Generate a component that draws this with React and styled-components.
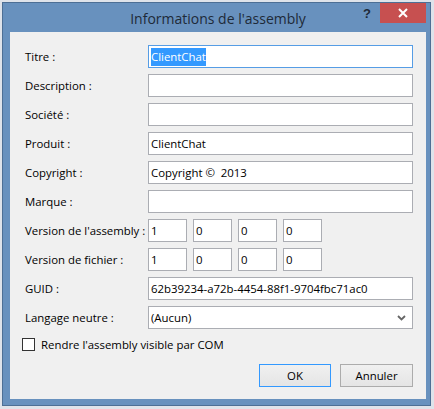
import React from "react";
import styled, { createGlobalStyle } from "styled-components";

const GlobalStyle = createGlobalStyle`
  html, body {
    margin: 0;
    padding: 0;
    background: #dfe3ea;
  }
  body {
    font-family: "Open Sans", "Noto Sans", "Liberation Sans", sans-serif;
    font-size: 11.4px;
  }
`;

const Window = styled.div`
  margin: 2px 0 0 2px;
  width: 429px;
  height: 404px;
  box-sizing: border-box;
  background: #6891be;
  border: 1px solid #4d6f95;
  display: flex;
  flex-direction: column;
  padding: 0 4px 6px 7px;
  position: relative;
`;

const TitleBar = styled.div`
  height: 29px;
  display: flex;
  align-items: center;
  justify-content: center;
  flex-shrink: 0;
`;

const Title = styled.div`
  font-family: "Open Sans", "Noto Sans", sans-serif;
  font-size: 14px;
  color: #1e2a38;
  margin-top: 1px;
`;

const Controls = styled.div`
  position: absolute;
  top: 0;
  right: 4px;
  display: flex;
  align-items: flex-start;
`;

const HelpBtn = styled.div`
  width: 20px;
  height: 20px;
  display: flex;
  align-items: center;
  justify-content: center;
  font-family: "Liberation Sans", sans-serif;
  font-weight: bold;
  font-size: 13px;
  color: #1e2a38;
  margin-right: 3px;
`;

const CloseBtn = styled.div`
  width: 46px;
  height: 20px;
  background: #c75050;
  display: flex;
  align-items: center;
  justify-content: center;
`;

const Client = styled.div`
  flex: 1;
  background: #f0f0f0;
  padding: 13px 13px 0 15px;
  display: flex;
  flex-direction: column;
`;

const Form = styled.div`
  display: grid;
  grid-template-columns: 123px 265px;
  grid-auto-rows: 23px;
  row-gap: 6px;
`;

const Label = styled.div`
  display: flex;
  align-items: center;
  color: #000;
  white-space: nowrap;
`;

const Field = styled.div`
  box-sizing: border-box;
  height: 23px;
  width: ${p => (p.$small ? "39px" : "100%")};
  background: #fff;
  border: 1px solid ${p => (p.$focus ? "#569de5" : "#abadb3")};
  display: flex;
  align-items: center;
  padding-left: 2px;
  color: #000;
  white-space: pre;
  position: relative;
`;

const Selected = styled.span`
  background: #3399ff;
  color: #fff;
  padding: 1px 0 2px;
`;

const VersionRow = styled.div`
  display: flex;
  gap: 6px;
`;

const Chevron = styled.div`
  position: absolute;
  right: 6px;
  top: 8px;
  display: flex;
`;

const CheckRow = styled.label`
  display: flex;
  align-items: center;
  gap: 6px;
  margin: 9px 0 0 -3px;
  height: 13px;
  color: #000;
`;

const CheckBox = styled.span`
  width: 13px;
  height: 13px;
  box-sizing: border-box;
  border: 1px solid #333;
  background: #fff;
`;

const Buttons = styled.div`
  display: flex;
  justify-content: flex-end;
  gap: 9px;
  margin-top: 13px;
`;

const Button = styled.div`
  box-sizing: border-box;
  width: ${p => (p.$w ? p.$w : 73)}px;
  height: 23px;
  border: 1px solid ${p => (p.$default ? "#3399ff" : "#acacac")};
  background: linear-gradient(#f0f0f0, #e5e5e5);
  display: flex;
  align-items: center;
  justify-content: center;
  color: #000;
`;

const rows = [
  { label: "Titre :", value: "ClientChat", focus: true },
  { label: "Description :", value: "" },
  { label: "Société :", value: "" },
  { label: "Produit :", value: "ClientChat" },
  { label: "Copyright :", value: "Copyright ©  2013" },
  { label: "Marque :", value: "" },
];

const Version = ({ values }) => (
  <VersionRow>
    {values.map((v, i) => (
      <Field key={i} $small>{v}</Field>
    ))}
  </VersionRow>
);

export default function App() {
  return (
    <>
      <GlobalStyle />
      <Window>
        <TitleBar>
          <Title>Informations de l'assembly</Title>
        </TitleBar>
        <Controls>
          <HelpBtn>?</HelpBtn>
          <CloseBtn>
            <svg width="10" height="10" viewBox="0 0 10 10">
              <path d="M1 1 L9 9 M9 1 L1 9" stroke="#fff" strokeWidth="2" />
            </svg>
          </CloseBtn>
        </Controls>
        <Client>
          <Form>
            {rows.map(r => (
              <React.Fragment key={r.label}>
                <Label>{r.label}</Label>
                <Field $focus={r.focus}>
                  {r.focus ? <Selected>{r.value}</Selected> : r.value}
                </Field>
              </React.Fragment>
            ))}
            <Label>Version de l'assembly :</Label>
            <Version values={["1", "0", "0", "0"]} />
            <Label>Version de fichier :</Label>
            <Version values={["1", "0", "0", "0"]} />
            <Label>GUID :</Label>
            <Field>62b39234-a72b-4454-88f1-9704fbc71ac0</Field>
            <Label>Langage neutre :</Label>
            <Field>
              (Aucun)
              <Chevron>
                <svg width="9" height="6" viewBox="0 0 9 6">
                  <path d="M1 1 L4.5 4.5 L8 1" stroke="#666" strokeWidth="1.8" fill="none" />
                </svg>
              </Chevron>
            </Field>
          </Form>
          <CheckRow>
            <CheckBox />
            Rendre l'assembly visible par COM
          </CheckRow>
          <Buttons>
            <Button $default $w={72}>OK</Button>
            <Button>Annuler</Button>
          </Buttons>
        </Client>
      </Window>
    </>
  );
}
